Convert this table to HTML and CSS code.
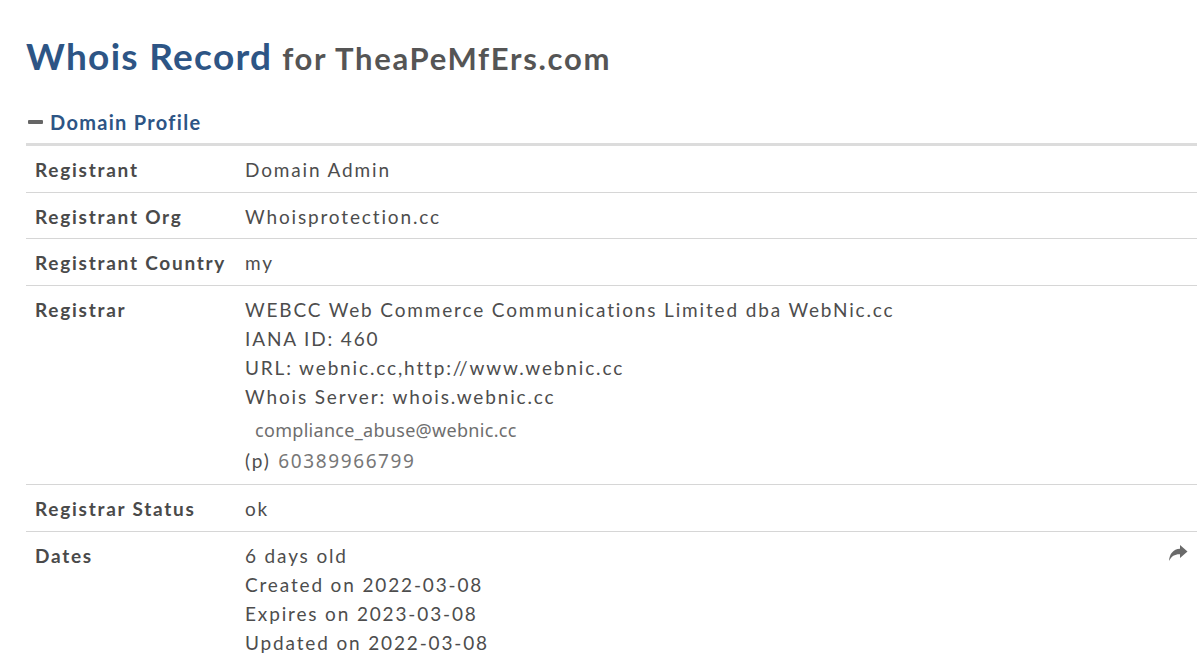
FILE: index.html
```html
<!DOCTYPE html>
<html>
<head>
<meta charset="utf-8">
<link rel="stylesheet" href="styles.css">
</head>
<body>
<div class="page">
  <h1 class="title"><span class="t-main">Whois Record</span> <span class="t-sub">for TheaPeMfErs.com</span></h1>
  <div class="section-head"><span class="dash"></span><span>Domain Profile</span></div>
  <div class="table">
    <div class="row"><div class="label">Registrant</div><div class="value">Domain Admin</div></div>
    <div class="row"><div class="label">Registrant Org</div><div class="value">Whoisprotection.cc</div></div>
    <div class="row"><div class="label">Registrant Country</div><div class="value">my</div></div>
    <div class="row">
      <div class="label">Registrar</div>
      <div class="value">
        <div>WEBCC Web Commerce Communications Limited dba WebNic.cc</div>
        <div>IANA ID: 460</div>
        <div>URL: webnic.cc,http://www.webnic.cc</div>
        <div>Whois Server: whois.webnic.cc</div>
        <div class="email">compliance_abuse@webnic.cc</div>
        <div class="phone">(p) <span class="img-text">60389966799</span></div>
      </div>
    </div>
    <div class="row"><div class="label">Registrar Status</div><div class="value">ok</div></div>
    <div class="row last">
      <div class="label">Dates</div>
      <div class="value">
        <div>6 days old</div>
        <div>Created on 2022-03-08</div>
        <div>Expires on 2023-03-08</div>
        <div>Updated on 2022-03-08</div>
      </div>
      <svg class="share" viewBox="0 0 20 18" width="20" height="18"><path d="M12 1 L19.5 7.5 L12 14 L12 10.2 C7 10 3.5 12 1 17 C1.5 10 5 5.2 12 4.8 Z" fill="#6a6a6a"/></svg>
    </div>
  </div>
</div>
</body>
</html>
```

FILE: styles.css
```css
html, body { margin: 0; padding: 0; background: #fff; }
body { font-family: Lato, "Open Sans", sans-serif; color: #4a4a4a; }
.page { padding: 0 3px 0 26px; }
.title { margin: 0; padding-top: 34px; height: 48px; line-height: 44px; font-weight: 700; white-space: nowrap; }
.t-main { color: #2d5585; font-size: 37px; letter-spacing: 1.3px; }
.t-sub { color: #555; font-size: 31px; letter-spacing: 1.7px; margin-left: 2px; }
.section-head { margin-top: 25px; height: 30px; display: flex; align-items: center; gap: 7px; color: #2d5585; font-size: 20px; font-weight: 700; letter-spacing: 1.3px; }
.dash { display: inline-block; width: 15px; height: 4px; background: #666; border-radius: 1px; margin-left: 2px; }
.table { border-top: 3px solid #dcdcdc; margin-top: 6px; }
.row { display: flex; border-bottom: 1px solid #d6d6d6; padding: 9px 0 7.5px; font-size: 19px; line-height: 29px; position: relative; letter-spacing: 1.75px; }
.row.last { border-bottom: none; }
.label { width: 210px; padding-left: 9px; font-weight: 700; color: #4a4a4a; flex: none; }
.value { color: #4d4d4d; letter-spacing: 1.85px; }
.email { font-family: "Noto Sans", Roboto, sans-serif; font-size: 18px; color: #6e6e6e; letter-spacing: 0.3px; padding-left: 10px; margin-top: 5px; line-height: 29px; }
.phone { line-height: 31px; }
.img-text { font-family: "Noto Sans", Roboto, sans-serif; font-size: 19px; color: #777; letter-spacing: 1.6px; margin-left: 1px; }
.share { position: absolute; right: 9px; top: 12px; }
```
